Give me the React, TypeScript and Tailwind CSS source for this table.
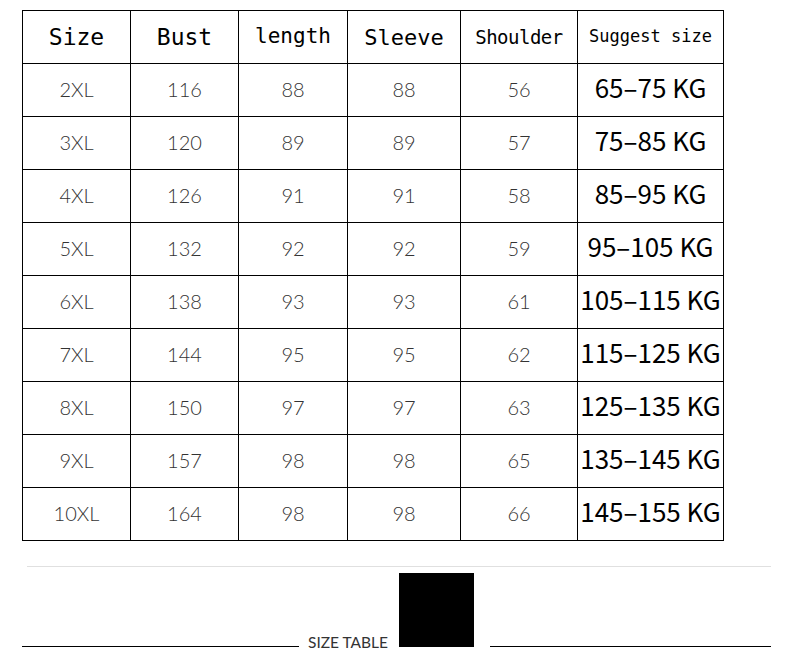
import React from 'react';

const rows = [
  ['2XL', '116', '88', '88', '56', '65–75 KG'],
  ['3XL', '120', '89', '89', '57', '75–85 KG'],
  ['4XL', '126', '91', '91', '58', '85–95 KG'],
  ['5XL', '132', '92', '92', '59', '95–105 KG'],
  ['6XL', '138', '93', '93', '61', '105–115 KG'],
  ['7XL', '144', '95', '95', '62', '115–125 KG'],
  ['8XL', '150', '97', '97', '63', '125–135 KG'],
  ['9XL', '157', '98', '98', '65', '135–145 KG'],
  ['10XL', '164', '98', '98', '66', '145–155 KG'],
];

const widths = ['w-[108px]', 'w-[108px]', 'w-[109px]', 'w-[113px]', 'w-[117px]', 'w-[146px]'];

const mono = "font-['DejaVu_Sans_Mono',monospace]";

export default function App() {
  return (
    <div className="w-[790px] h-[662px] bg-white overflow-hidden">
      <table className="ml-[22px] mt-[10px] border-collapse table-fixed w-[701px]">
        <thead>
          <tr className="h-[53px]">
            <th className={`${widths[0]} border border-black font-normal text-[23px] text-black ${mono}`}>Size</th>
            <th className={`${widths[1]} border border-black font-normal text-[23px] text-black ${mono}`}>Bust</th>
            <th className={`${widths[2]} border border-black font-normal text-[21px] text-black ${mono}`}>length</th>
            <th className={`${widths[3]} border border-black font-normal text-[22px] text-black ${mono}`}>Sleeve</th>
            <th className={`${widths[4]} border border-black font-normal text-[19px] text-black ${mono} tracking-[-0.5px]`}>Shoulder</th>
            <th className={`${widths[5]} border border-black font-normal text-[17px] text-black ${mono}`}>Suggest size</th>
          </tr>
        </thead>
        <tbody>
          {rows.map((r) => (
            <tr key={r[0]} className="h-[53px]">
              {r.slice(0, 5).map((c, i) => (
                <td
                  key={i}
                  className="border border-black text-center pb-[3px] font-['Lato',sans-serif] font-light text-[20px] text-[#333]"
                >
                  {c}
                </td>
              ))}
              <td className="border border-black text-center pb-[6px] font-['Noto_Sans_CJK_SC',sans-serif] text-[26px] text-black leading-none">
                {r[5]}
              </td>
            </tr>
          ))}
        </tbody>
      </table>

      <div className="ml-[27px] mt-[25px] w-[744px] h-px bg-[#e0e0e0]" />

      <div className="flex items-end ml-[22px] mt-[6px]">
        <div className="w-[277px] h-[1.5px] bg-black" />
        <span className="ml-[9px] mb-[-3px] font-['Lato',sans-serif] text-[15.5px] leading-none text-[#333]">
          SIZE TABLE
        </span>
        <div className="ml-[11px] w-[75px] h-[74px] bg-black" />
        <div className="ml-[16px] w-[281px] h-[1.5px] bg-black" />
      </div>
    </div>
  );
}
